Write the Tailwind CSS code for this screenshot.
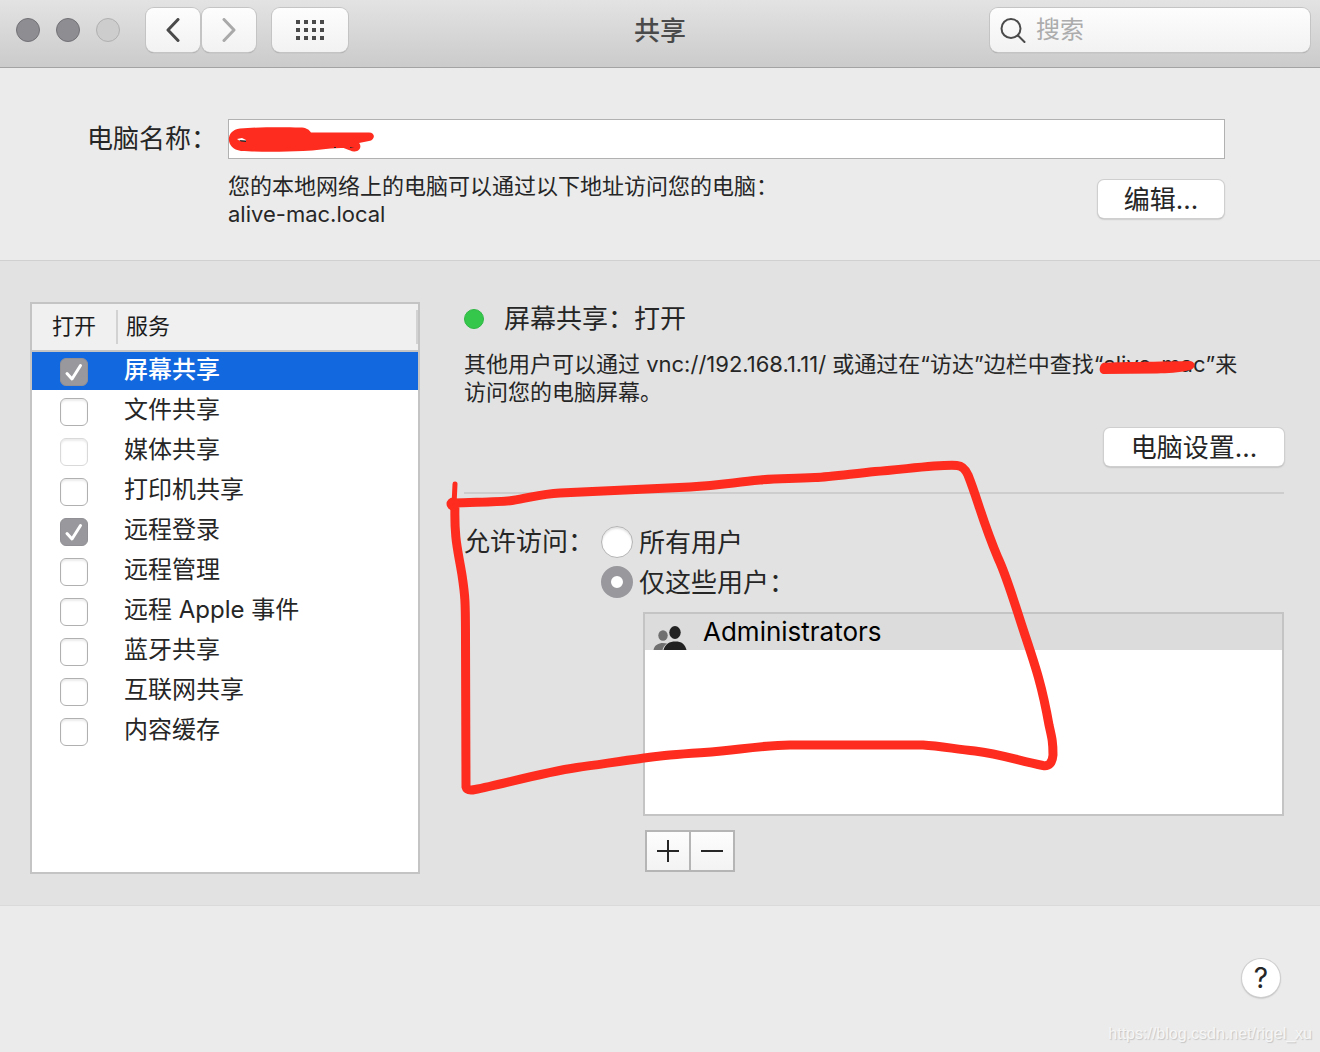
<!DOCTYPE html>
<html lang="zh-CN">
<head>
  <meta charset="UTF-8" />
  <meta name="viewport" content="width=device-width, initial-scale=1.0"/>
  <title>共享</title>
  <script src="https://cdn.jsdelivr.net/npm/@tailwindcss/browser@4"></script>
</head>
<body class="min-h-screen flex flex-col relative bg-[#ebebeb] text-[#262626] font-['Inter','Noto_Sans_CJK_SC',sans-serif]">

  <!-- Toolbar -->
  <header class="grid grid-cols-[1fr_auto_1fr] items-start h-[68px] pt-2 px-[10px] bg-linear-to-b from-[#e3e3e3] to-[#cbcbcb] border-b border-[#a3a3a3]">
    <div class="flex items-center h-11 pl-[6px]">
      <div class="flex gap-4">
        <button aria-label="关闭" class="size-6 rounded-full bg-[#8e8d92] border border-[#727176]"></button>
        <button aria-label="最小化" class="size-6 rounded-full bg-[#8e8d92] border border-[#727176]"></button>
        <button aria-label="缩放" disabled class="size-6 rounded-full bg-[#cdcdcd] border border-[#b0b0b0]"></button>
      </div>
      <div class="flex gap-[2px] ml-[26px]">
        <button aria-label="后退" class="flex items-center justify-center w-[54px] h-11 rounded-lg bg-linear-to-b from-[#fdfdfd] to-[#f2f2f2] shadow-[0_0_0_1px_#c4c4c4,0_1px_1px_#8a8a8a]">
          <svg class="w-4 h-6" viewBox="0 0 16 24" fill="none" stroke="#4a4a4a" stroke-width="3" stroke-linecap="round" stroke-linejoin="round"><path d="M13 1.500L3 12l10 10.500"/></svg>
        </button>
        <button aria-label="前进" disabled class="flex items-center justify-center w-[54px] h-11 rounded-lg bg-linear-to-b from-[#fdfdfd] to-[#f2f2f2] shadow-[0_0_0_1px_#c4c4c4,0_1px_1px_#8a8a8a]">
          <svg class="w-4 h-6" viewBox="0 0 16 24" fill="none" stroke="#a9a9a9" stroke-width="3" stroke-linecap="round" stroke-linejoin="round"><path d="M3 1.500L13 12 3 22.500"/></svg>
        </button>
      </div>
      <button aria-label="显示全部" class="flex items-center justify-center w-[76px] h-11 ml-4 rounded-lg bg-linear-to-b from-[#fdfdfd] to-[#f2f2f2] shadow-[0_0_0_1px_#c4c4c4,0_1px_1px_#8a8a8a]">
        <svg class="w-7 h-5" viewBox="0 0 28 20" fill="#4a4a4a">
          <path d="M0 0h4v4H0zM8 0h4v4H8zM16 0h4v4h-4zM24 0h4v4h-4zM0 8h4v4H0zM8 8h4v4H8zM16 8h4v4h-4zM24 8h4v4h-4zM0 16h4v4H0zM8 16h4v4H8zM16 16h4v4h-4zM24 16h4v4h-4z"/>
        </svg>
      </button>
    </div>
    <h1 class="text-[26px] leading-[46px] font-medium text-[#4a4a4a]">共享</h1>
    <label class="flex items-center justify-self-end w-80 h-11 pl-[10px] rounded-lg bg-linear-to-b from-[#fdfdfd] to-[#f2f2f2] shadow-[0_0_0_1px_#c4c4c4,0_1px_1px_#8a8a8a]">
      <svg class="size-[26px] shrink-0" viewBox="0 0 26 26" fill="none" stroke="#4a4a4a" stroke-width="2" stroke-linecap="round"><circle cx="11" cy="11.500" r="9.500"/><path d="M18 18.500l6.500 6.500"/></svg>
      <input type="text" aria-label="搜索" placeholder="搜索" class="w-full ml-[10px] text-2xl text-[#4a4a4a] placeholder:text-[#acacac] outline-none">
    </label>
  </header>

  <!-- Computer name -->
  <section class="flex h-[193px] pt-[51px] pl-[87px] pr-[95px] border-b border-[#d0d0d0]">
    <label for="computerName" class="w-[141px] shrink-0 text-[26px] leading-10">电脑名称：</label>
    <div class="flex-1">
      <div class="relative">
        <input type="text" id="computerName" class="block w-full h-10 px-2 text-[26px] bg-white border border-[#b1b1b1]">
        <svg class="absolute left-0 top-0 w-[150px] h-10 pointer-events-none" viewBox="0 0 150 40">
          <path fill="#fd2c1f" d="M12 9.500C30 8 55 8 72 8.500c6 0 9 2 11 5h58c7 0 6 8 0 8.500l-10 2c3 3 1 9-5 8.500-6-1-8-4-13-3.500C98 29.500 88 31.500 75 32c-20 1-45 1-62 0C-3 30-3 11 12 9.500z"/>
          <path fill="#fff" d="M9 20l5-1 4 2v1h-6z"/>
          <path fill="#262626" d="M11 21l7 .5V23l-5-.5zM122 28l4 1h-4zM106 28h2v1h-2z"/>
        </svg>
      </div>
      <div class="flex justify-between items-start pt-[13px]">
        <p class="text-[22px] leading-7">您的本地网络上的电脑可以通过以下地址访问您的电脑：<br>alive-mac.local</p>
        <button class="w-[126px] h-[38px] mt-2 mr-px rounded-md bg-white text-[26px] leading-10 shadow-[0_0_0_1px_#cfcfcf,0_1px_2px_#8f8f8f]">编辑...</button>
      </div>
    </div>
  </section>

  <!-- Services -->
  <main class="relative flex items-start min-h-[645px] pt-[41px] pb-[31px] pl-[30px] pr-9 gap-11 bg-[#e2e2e2] border-b border-[#dadada]">
    <div class="w-[390px] min-h-[572px] shrink-0 bg-white border-2 border-[#c4c4c4]">
      <table class="w-full table-fixed border-separate border-spacing-0 text-2xl">
        <thead class="bg-[#f0f0f0] text-[22px] text-[#1c1c1c]">
          <tr class="h-12">
            <th class="w-[86px] p-0 font-normal border-b-2 border-[#c4c4c4]"><div class="flex items-center justify-center h-[34px] border-r-2 border-[#d2d2d2]">打开</div></th>
            <th class="p-0 font-normal text-left border-b-2 border-[#c4c4c4]"><div class="flex items-center h-[34px] pl-2 border-r-2 border-[#d2d2d2]">服务</div></th>
          </tr>
        </thead>
        <tbody id="services"></tbody>
      </table>
    </div>

    <div class="flex-1 min-w-0 pt-px">
      <h2 class="flex items-center gap-5 h-8 text-[26px] leading-8"><span class="size-5 rounded-full bg-[#35c74b] border border-[#2fb744]"></span>屏幕共享：打开</h2>
      <p class="mt-[15px] pr-5 text-[22px] leading-7">其他用户可以通过 vnc://192.168.1.11/ 或通过在“访达”边栏中查找“<span class="relative">alive-mac<svg class="absolute -left-1 top-[9px] w-24 h-4 pointer-events-none" viewBox="0 0 96 16"><path fill="#fd2c1f" d="M4 3c2-1 50-1 87-2 6 1 6 7 0 9-12 3-22 3-33 3.500L4 14c-5-1-4-9 0-11z"/></svg></span>”来<br>访问您的电脑屏幕。</p>
      <div class="flex justify-end mt-[22px]">
        <button class="w-[180px] h-[38px] rounded-md bg-white text-[26px] leading-10 shadow-[0_0_0_1px_#cfcfcf,0_1px_2px_#8f8f8f]">电脑设置...</button>
      </div>
      <hr class="mt-[26px] border-t-2 border-[#cdcdcd]">

      <fieldset class="flex mt-7 text-[26px]">
        <legend class="float-left w-[137px] leading-10">允许访问：</legend>
        <div class="flex-1 pt-1">
          <div class="flex flex-col gap-2">
            <label class="flex items-center gap-[6px] h-8">
              <input type="radio" name="access" class="appearance-none size-8 rounded-full bg-white border border-[#b4b4b4] shadow-[inset_0_2px_2px_#e4e4e4] checked:border-[10px] checked:border-[#99989d] checked:shadow-none">
              所有用户
            </label>
            <label class="flex items-center gap-[6px] h-8">
              <input type="radio" name="access" checked class="appearance-none size-8 rounded-full bg-white border border-[#b4b4b4] shadow-[inset_0_2px_2px_#e4e4e4] checked:border-[10px] checked:border-[#99989d] checked:shadow-none">
              仅这些用户：
            </label>
          </div>
          <ul class="h-[204px] mt-[14px] ml-[42px] bg-white border-2 border-[#c4c4c4]">
            <li class="flex items-end gap-4 h-9 pl-2 bg-[#dcdcdc] text-black leading-9">
              <svg class="w-[34px] h-6" viewBox="0 0 34 24">
                <g fill="#707070"><ellipse cx="10" cy="9.500" rx="4.700" ry="5.300"/><path d="M.5 24c1-5 5-7 9.500-7 1.500 0 3 .2 4 .5-2.500 2-4 4-4.500 6.500z"/></g>
                <g fill="#222"><ellipse cx="22" cy="6.500" rx="5.700" ry="6.500"/><path d="M10.500 24c1.500-6 6-8.500 12-8.500S32 18 33.500 24z"/></g>
              </svg>
              Administrators
            </li>
          </ul>
          <div class="flex w-[90px] mt-[14px] ml-11 border-2 border-[#b5b5b5]">
            <button type="button" aria-label="添加" class="flex items-center justify-center flex-1 h-[38px] bg-linear-to-b from-[#fdfdfd] to-[#f3f3f3] border-r-2 border-[#b5b5b5]">
              <svg class="size-[22px]" viewBox="0 0 22 22" stroke="#262626" stroke-width="2"><path d="M11 0v22M0 11h22"/></svg>
            </button>
            <button type="button" aria-label="移除" class="flex items-center justify-center flex-1 h-[38px] bg-linear-to-b from-[#fdfdfd] to-[#f3f3f3]">
              <svg class="size-[22px]" viewBox="0 0 22 22" stroke="#262626" stroke-width="2"><path d="M0 11h22"/></svg>
            </button>
          </div>
        </div>
      </fieldset>
    </div>

    <!-- Red marker around the access settings -->
    <svg class="absolute left-[440px] top-[189px] w-[630px] h-[360px] pointer-events-none" viewBox="440 450 630 360" fill="none" stroke="#fd2c1f" stroke-width="9" stroke-linecap="round" stroke-linejoin="round">
      <path d="M455 504C454 540 458 550 462 575C465 595 465.500 600 465.500 640L466 787Q467 791 475 789.500C500 785 540 773 577 767.500C610 763 640 758 670 755C700 752 710 753 740 749C765 746 780 745 790 745L923 745C940 746 955 749 975 751C1000 754 1020 761 1043 765.500Q1052 767 1053 755C1053 742 1052 738 1049 725C1042 685 1035 665 1024 632C1015 605 1007 577 998 558C982 520 978 500 968 475Q964 466 957 465.500C940 464 900 470 875 471.500C850 474 830 477 815 477.500C790 479 780 478 760 480C730 483 720 485 690 487L560 493C540 494 530 498 512 500.500C500 502 480 502 453 503"/>
      <path stroke-width="5" d="M455 484L454 505"/>
      <circle cx="453" cy="504" r="3" stroke-width="7"/>
    </svg>
  </main>

  <footer class="flex flex-1 items-start justify-end pt-[53px] pr-10">
    <button aria-label="帮助" class="size-[38px] rounded-full bg-white text-[28px] leading-[38px] shadow-[0_0_0_1px_#cfcfcf,0_1px_2px_#8f8f8f]">?</button>
  </footer>
  <a href="https://blog.csdn.net/rigel_xu" class="absolute right-2 bottom-2 font-['Liberation_Sans',sans-serif] text-base leading-5 text-[#f6f6f6] [text-shadow:1px_1px_1px_#c4c4c4]">https://blog.csdn.net/rigel_xu</a>

  <script>
    const services = [
      { name: "屏幕共享", checked: true, selected: true },
      { name: "文件共享" },
      { name: "媒体共享", disabled: true },
      { name: "打印机共享" },
      { name: "远程登录", checked: true },
      { name: "远程管理" },
      { name: "远程 Apple 事件" },
      { name: "蓝牙共享" },
      { name: "互联网共享" },
      { name: "内容缓存" }
    ];

    document.getElementById('services').innerHTML = services.map((s, i) => `
      <tr class="h-10 ${s.selected ? 'bg-[#1268de] text-white font-medium' : ''}">
        <td class="p-0 border-b-2 border-white">
          <div class="grid place-items-center size-7 ml-7 mt-[2px]">
            <input type="checkbox" id="service${i}" ${s.checked ? 'checked' : ''} ${s.disabled ? 'disabled' : ''} class="peer col-start-1 row-start-1 appearance-none size-7 rounded-md bg-white border border-[#b0b0b0] shadow-[inset_0_2px_2px_#ececec] checked:bg-[#99989d] checked:border-[#919095] checked:shadow-none disabled:border-[#d9d9d9]">
            <svg class="hidden peer-checked:block col-start-1 row-start-1 size-7 pointer-events-none" viewBox="0 0 28 28" fill="none" stroke="#fff" stroke-width="3" stroke-linecap="round" stroke-linejoin="round"><path d="M7 15.500l5 5.500L20.500 7.500"/></svg>
          </div>
        </td>
        <td class="p-0 pl-[6px] border-b-2 border-white align-top"><label for="service${i}" class="block leading-9">${s.name}</label></td>
      </tr>`).join('');
  </script>
</body>
</html>
